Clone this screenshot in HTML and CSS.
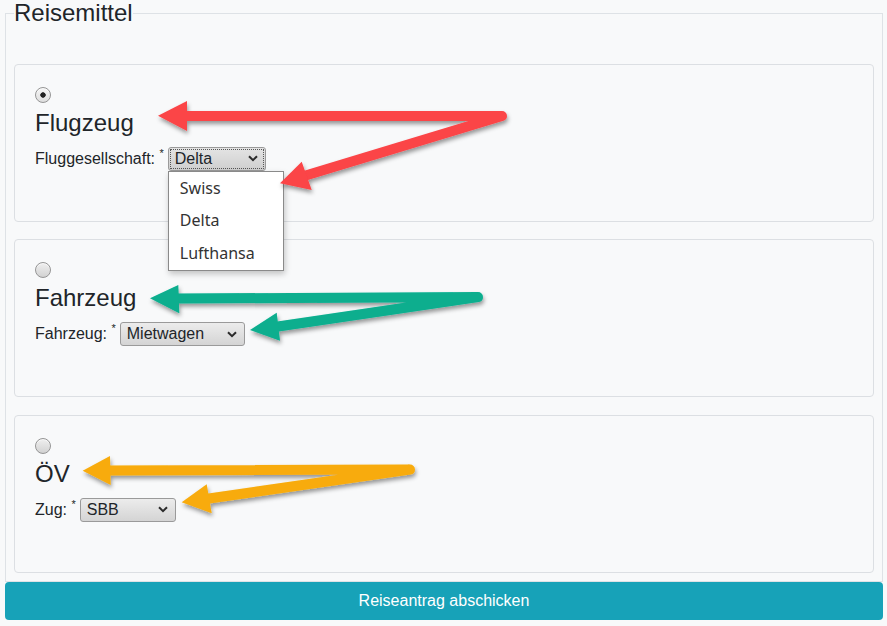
FILE: index.html
```html
<!DOCTYPE html>
<html lang="de">
<head>
<meta charset="utf-8">
<title>Reisemittel</title>
<link rel="stylesheet" href="styles.css">
</head>
<body>
<div class="page">
  <fieldset class="group">
    <legend class="group-title">Reisemittel</legend>

    <div class="card">
      <input type="radio" class="radio" name="mittel" checked>
      <h3 class="card-title">Flugzeug</h3>
      <div class="field">
        <label class="field-label">Fluggesellschaft: <sup class="req">*</sup></label>
        <div class="select w-flug is-open">
          <span class="select-value">Delta</span>
          <svg class="chev" width="10" height="7" viewBox="0 0 10 7"><path d="M1 1.2 L5 5.2 L9 1.2" fill="none" stroke="#2b2b2b" stroke-width="2"/></svg>
          <ul class="dropdown">
            <li>Swiss</li>
            <li>Delta</li>
            <li>Lufthansa</li>
          </ul>
        </div>
      </div>
    </div>

    <div class="card">
      <input type="radio" class="radio" name="mittel">
      <h3 class="card-title">Fahrzeug</h3>
      <div class="field">
        <label class="field-label">Fahrzeug: <sup class="req">*</sup></label>
        <div class="select w-fahr">
          <span class="select-value">Mietwagen</span>
          <svg class="chev" width="10" height="7" viewBox="0 0 10 7"><path d="M1 1.2 L5 5.2 L9 1.2" fill="none" stroke="#2b2b2b" stroke-width="2"/></svg>
        </div>
      </div>
    </div>

    <div class="card">
      <input type="radio" class="radio" name="mittel">
      <h3 class="card-title">ÖV</h3>
      <div class="field">
        <label class="field-label">Zug: <sup class="req">*</sup></label>
        <div class="select w-zug">
          <span class="select-value">SBB</span>
          <svg class="chev" width="10" height="7" viewBox="0 0 10 7"><path d="M1 1.2 L5 5.2 L9 1.2" fill="none" stroke="#2b2b2b" stroke-width="2"/></svg>
        </div>
      </div>
    </div>
  </fieldset>

  <button class="submit" type="button">Reiseantrag abschicken</button>

  <svg class="annot" width="887" height="626" viewBox="0 0 887 626">
    <defs>
      <filter id="sh" x="-20%" y="-30%" width="140%" height="170%">
        <feDropShadow dx="1" dy="3" stdDeviation="2" flood-color="#000" flood-opacity="0.4"/>
      </filter>
    </defs>
    <g filter="url(#sh)" fill="#fb4447" stroke="#fb4447">
      <path d="M184 116 L502 116 L304 176" fill="none" stroke-width="10" stroke-linecap="round" stroke-linejoin="round"/>
      <polygon points="158,115.8 187,101 187,131" stroke="none"/>
      <polygon points="280,183.3 301.7,161.7 311.7,190" stroke="none"/>
    </g>
    <g filter="url(#sh)" fill="#08ae8e" stroke="#08ae8e">
      <path d="M176 298.5 L478 297 L278 326.5" fill="none" stroke-width="10" stroke-linecap="round" stroke-linejoin="round"/>
      <polygon points="150,298.3 178.3,285 179.3,313.3" stroke="none"/>
      <polygon points="250,330 276.7,312.7 280,340.7" stroke="none"/>
    </g>
    <g filter="url(#sh)" fill="#f8ab0a" stroke="#f8ab0a">
      <path d="M108 470.5 L410 469.5 L209 498.5" fill="none" stroke-width="10" stroke-linecap="round" stroke-linejoin="round"/>
      <polygon points="82.7,470.7 110,456 110.7,485" stroke="none"/>
      <polygon points="181.7,502.3 206.7,484.3 211.7,513.3" stroke="none"/>
    </g>
  </svg>
</div>
</body>
</html>
```

FILE: styles.css
```css
html, body {
  margin: 0;
  padding: 0;
  background: #f8f9fa;
}

body {
  font-family: "Liberation Sans", Arial, sans-serif;
  color: #212529;
  font-size: 16px;
}

.page {
  position: relative;
  width: 887px;
  height: 626px;
  box-sizing: border-box;
  padding: 0 4px 0 5px;
  overflow: hidden;
}

.group {
  margin: 0;
  padding: 37.6px 8px 8px 8px;
  border: 1px solid #dee2e6;
  min-width: 0;
}

.group-title {
  padding: 0;
  font-size: 24px;
  line-height: 1.1;
  color: #212529;
}

.card {
  box-sizing: border-box;
  height: 158px;
  border: 1px solid #dcdfe3;
  border-radius: 4px;
  padding: 22px 20px 0 20px;
  margin-bottom: 17.5px;
}

.card:last-of-type {
  margin-bottom: 0;
}

.radio {
  -webkit-appearance: none;
  appearance: none;
  display: block;
  box-sizing: border-box;
  width: 16px;
  height: 16px;
  margin: 0;
  border-radius: 50%;
  border: 1px solid #959595;
  background: linear-gradient(#efefef, #d2d2d2);
  box-shadow: inset 0 1px 0 rgba(255,255,255,0.7);
}

.radio:checked {
  background:
    radial-gradient(circle at 50% 50%, #222 0, #222 2.4px, rgba(34,34,34,0) 3px),
    linear-gradient(#f6f6f6, #dedede);
}

.card-title {
  margin: 6px 0 0 0;
  font-size: 24px;
  font-weight: normal;
  line-height: 28.8px;
  color: #212529;
}

.field {
  display: flex;
  align-items: center;
  height: 24px;
  margin-top: 9px;
  gap: 4px;
}

.field-label {
  font-size: 16px;
  line-height: 24px;
  white-space: nowrap;
}

.req {
  font-size: 11px;
  line-height: 0;
  vertical-align: 7px;
}

.select {
  position: relative;
  box-sizing: border-box;
  height: 24px;
  display: flex;
  align-items: center;
  justify-content: space-between;
  padding: 0 7px 0 6px;
  border: 1px solid #9a9a9a;
  border-radius: 3px;
  background: linear-gradient(#ececec, #d4d4d4);
  font-size: 16px;
  line-height: 22px;
  color: #212529;
}

.select-value {
  white-space: nowrap;
}

.chev {
  display: block;
  flex: none;
}

.w-flug { width: 98px; }
.w-fahr { width: 125px; }
.w-zug { width: 96px; }

.is-open {
  outline: 1px dotted #555;
  outline-offset: -3px;
  background: linear-gradient(#e4e4e4, #cfcfcf);
}

.dropdown {
  position: absolute;
  top: calc(100% + 1px);
  left: -1px;
  width: 116px;
  box-sizing: border-box;
  margin: 0;
  padding: 0;
  list-style: none;
  background: #fff;
  border: 1px solid #8a8a8a;
  box-shadow: 1px 3px 6px rgba(0,0,0,0.22);
  z-index: 2;
}

.dropdown li {
  height: 32.7px;
  line-height: 32.7px;
  padding-left: 11px;
  font-family: "Noto Sans", "DejaVu Sans", sans-serif;
  font-size: 16px;
  color: #333;
}

.submit {
  display: block;
  width: 100%;
  height: 38px;
  margin: 0;
  border: none;
  border-radius: 4px;
  background: #17a2b8;
  color: #fff;
  font-family: "Liberation Sans", Arial, sans-serif;
  font-size: 16px;
}

.annot {
  position: absolute;
  top: 0;
  left: 0;
  pointer-events: none;
  z-index: 3;
}
```
